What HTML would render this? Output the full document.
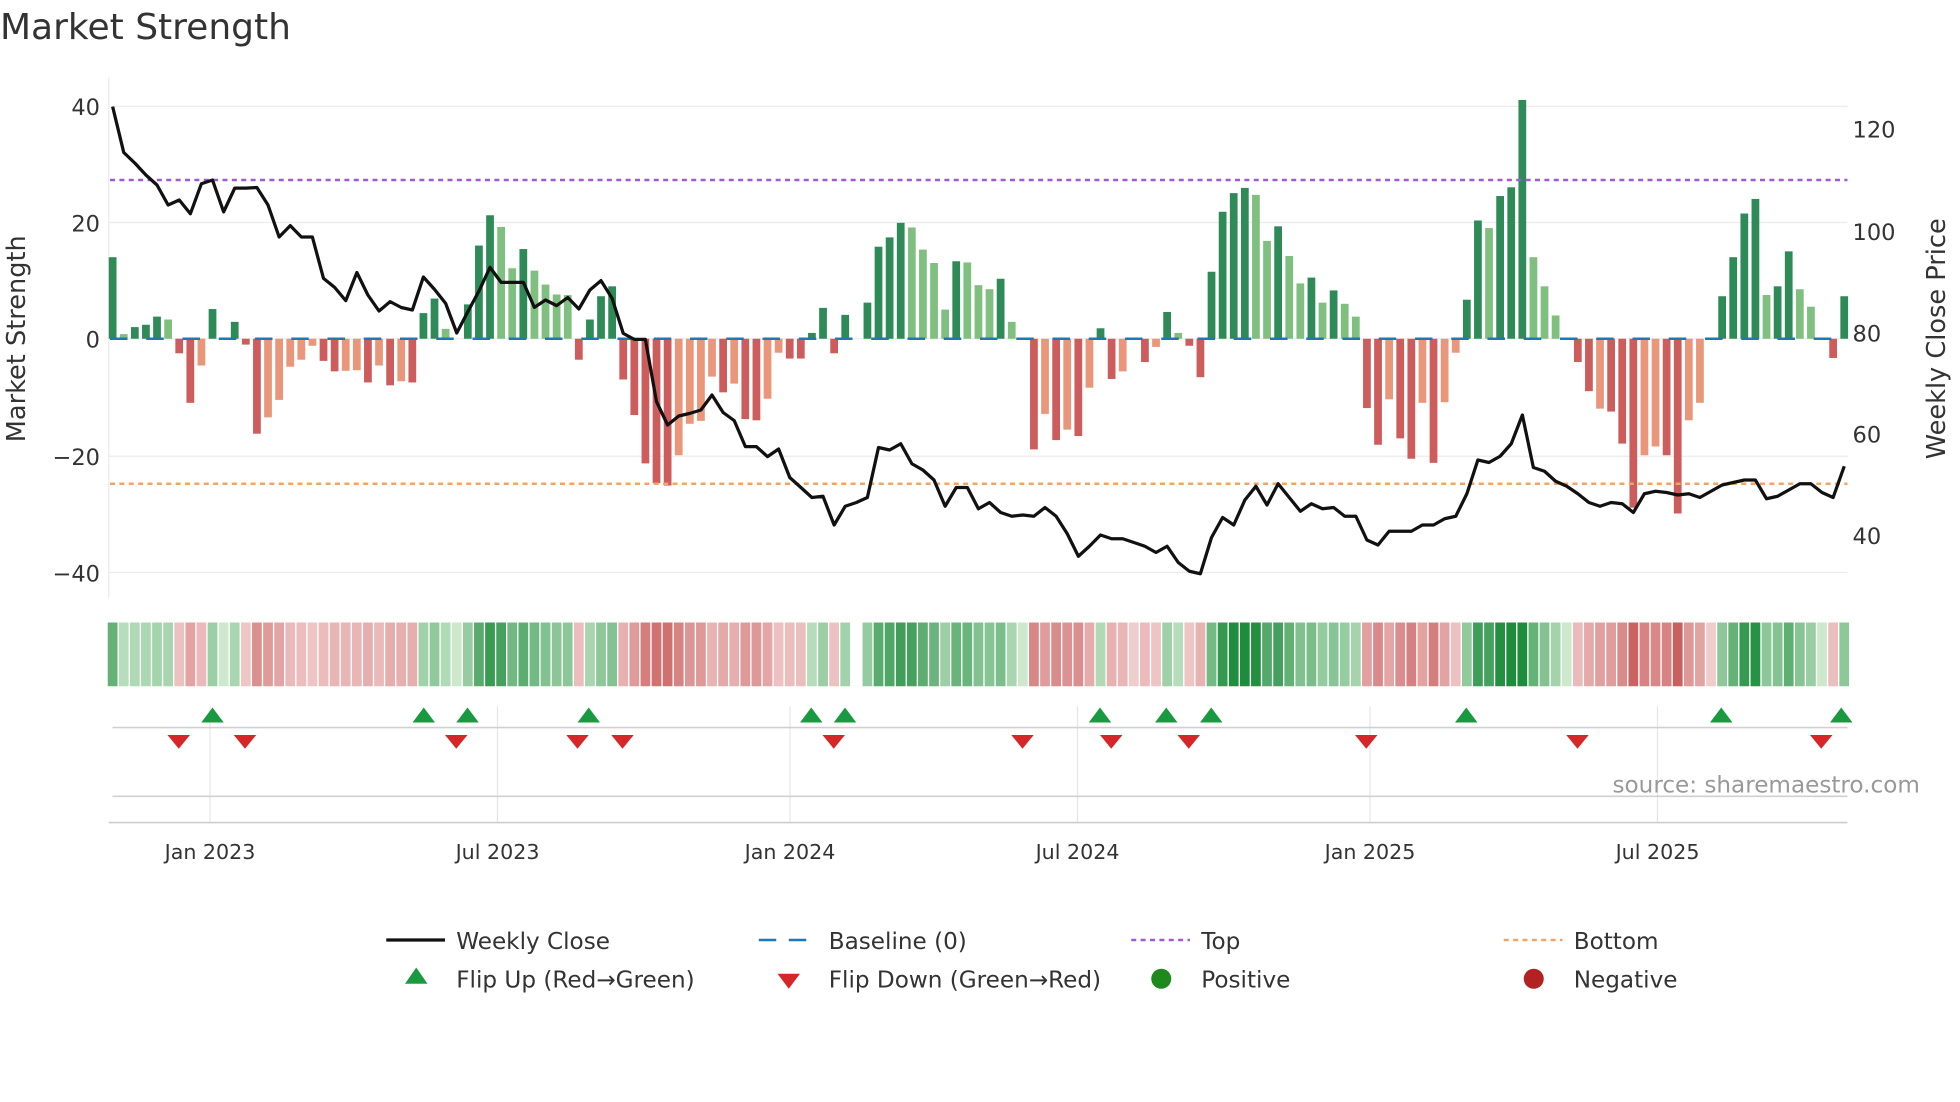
<!DOCTYPE html>
<html><head><meta charset="utf-8">
<style>
html,body{margin:0;padding:0;background:#fff;}
svg{display:block;font-family:"DejaVu Sans","Liberation Sans",sans-serif;}
</style></head>
<body>
<svg id="c" width="1960" height="1102" viewBox="0 0 1568 881.6" xmlns="http://www.w3.org/2000/svg">
<text x="0" y="31" font-size="28.8" fill="#333">Market Strength</text>
<g stroke="#ececec" stroke-width="1">
<line x1="87" y1="85" x2="1478" y2="85"/><line x1="87" y1="178" x2="1478" y2="178"/>
<line x1="87" y1="271" x2="1478" y2="271"/><line x1="87" y1="365" x2="1478" y2="365"/>
<line x1="87" y1="458" x2="1478" y2="458"/>
<line x1="87" y1="62" x2="87" y2="478"/>
</g>
<g font-size="18" fill="#333" text-anchor="end">
<text x="80" y="92">40</text><text x="80" y="185">20</text><text x="80" y="278">0</text>
<text x="80" y="372">−20</text><text x="80" y="465">−40</text>
</g>
<g font-size="18" fill="#333">
<text x="1482" y="110">120</text><text x="1482" y="192">100</text><text x="1482" y="273">80</text>
<text x="1482" y="354">60</text><text x="1482" y="435">40</text>
</g>
<text transform="translate(20,271) rotate(-90)" font-size="20.5" fill="#333" text-anchor="middle">Market Strength</text>
<text transform="translate(1556,271) rotate(-90)" font-size="20.5" fill="#333" text-anchor="middle">Weekly Close Price</text>
<g id="bars"></g>
<line x1="88" y1="271" x2="1478" y2="271" stroke="#1f77b4" stroke-width="2" stroke-dasharray="14 15"/>
<line x1="88" y1="144" x2="1478" y2="144" stroke="#a259d9" stroke-width="2" stroke-dasharray="4 3.5"/>
<line x1="88" y1="387" x2="1478" y2="387" stroke="#f4a460" stroke-width="2" stroke-dasharray="4 3.5"/>
<polyline id="price" fill="none" stroke="#111" stroke-width="2.6" stroke-linejoin="round"/>
<g id="strip"></g>
<g stroke="#e6e6e6" stroke-width="1">
<line x1="168" y1="565" x2="168" y2="658"/><line x1="398" y1="565" x2="398" y2="658"/>
<line x1="632" y1="565" x2="632" y2="658"/><line x1="862" y1="565" x2="862" y2="658"/>
<line x1="1096" y1="565" x2="1096" y2="658"/><line x1="1326" y1="565" x2="1326" y2="658"/>
</g>
<line x1="90" y1="582" x2="1478" y2="582" stroke="#d0d0d0" stroke-width="1.3"/>
<line x1="90" y1="637" x2="1478" y2="637" stroke="#d0d0d0" stroke-width="1.3"/>
<line x1="87" y1="658" x2="1478" y2="658" stroke="#ccc" stroke-width="1.3"/>
<g id="marks"></g>
<text x="1290" y="634" font-size="18.5" fill="#999">source: sharemaestro.com</text>
<g font-size="16.5" fill="#333" text-anchor="middle">
<text x="168" y="687">Jan 2023</text><text x="398" y="687">Jul 2023</text>
<text x="632" y="687">Jan 2024</text><text x="862" y="687">Jul 2024</text>
<text x="1096" y="687">Jan 2025</text><text x="1326" y="687">Jul 2025</text>
</g>
<g font-size="18.5" fill="#333">
<line x1="309" y1="752" x2="356" y2="752" stroke="#111" stroke-width="2.6"/>
<text x="365" y="759">Weekly Close</text>
<line x1="607" y1="752" x2="654" y2="752" stroke="#1f77b4" stroke-width="2" stroke-dasharray="14 10"/>
<text x="663" y="759">Baseline (0)</text>
<line x1="905" y1="752" x2="952" y2="752" stroke="#a259d9" stroke-width="2" stroke-dasharray="4 3.5"/>
<text x="961" y="759">Top</text>
<line x1="1203" y1="752" x2="1250" y2="752" stroke="#f4a460" stroke-width="2" stroke-dasharray="4 3.5"/>
<text x="1259" y="759">Bottom</text>
<polygon points="333,774 342,787 324,787" fill="#1a9a40"/>
<text x="365" y="790">Flip Up (Red→Green)</text>
<polygon points="622,779 640,779 631,791" fill="#d62728"/>
<text x="663" y="790">Flip Down (Green→Red)</text>
<circle cx="929" cy="783" r="8" fill="#1e8a1e"/>
<text x="961" y="790">Positive</text>
<circle cx="1227" cy="783" r="8" fill="#b22222"/>
<text x="1259" y="790">Negative</text>
</g>
</svg>
<script>
var V=[[14,0],[0.8,1],[2,0],[2.4,0],[3.8,0],[3.3,1],[-2.5,0],[-11,0],[-4.6,1],[5.1,0],[0,0],[2.9,0],[-1,0],[-16.3,0],[-13.5,1],[-10.5,1],[-4.8,1],[-3.6,1],[-1.2,1],[-3.8,0],[-5.6,0],[-5.5,1],[-5.4,1],[-7.5,0],[-4.6,1],[-8,0],[-7.3,1],[-7.5,0],[4.4,0],[6.9,0],[1.7,1],[0,0],[5.9,0],[16,0],[21.2,0],[19.2,1],[12.1,1],[15.4,0],[11.7,1],[9.3,1],
[7.6,1],[7.5,1],[-3.6,0],[3.3,0],[7.3,0],[9,0],[-7,0],[-13.1,0],[-21.4,0],[-24.8,0],[-25.2,0],[-20,1],[-14.6,1],[-14.1,1],[-6.5,1],[-9.2,0],[-7.7,1],[-13.8,0],[-14,0],[-10.3,1],[-2.4,1],[-3.4,0],[-3.4,0],[1,0],[5.3,0],[-2.5,0],[4.1,0],[0,0],[6.2,0],[15.8,0],[17.4,0],[19.9,0],[19.1,1],[15.3,1],[13,1],[5,1],[13.3,0],[13.1,1],[9.2,1],[8.5,1],[10.3,0],
[2.9,1],[0,0],[-19,0],[-12.9,1],[-17.4,0],[-15.6,1],[-16.7,0],[-8.4,1],[1.8,0],[-6.9,0],[-5.6,1],[0,0],[-4,0],[-1.4,1],[4.6,0],[1,1],[-1.2,0],[-6.6,0],[11.5,0],[21.8,0],[25,0],[25.9,0],[24.7,1],[16.8,1],[19.3,0],[14.2,1],[9.5,1],[10.5,0],[6.2,1],[8.3,0],[6,1],[3.8,1],[-11.9,0],[-18.2,0],[-10.4,1],[-17.1,0],[-20.6,0],[-11,1],[-21.3,0],[-10.9,1],[-2.4,1],
[6.7,0],[20.3,0],[19,1],[24.5,0],[26,0],[41,0],[14,1],[9,1],[4,1],[0,0],[-4,0],[-9,0],[-12,1],[-12.5,0],[-18,0],[-29,0],[-20,1],[-18.5,1],[-20,0],[-30,0],[-14,1],[-11,1],[0,0],[7.3,0],[14,0],[21.5,0],[24,0],[7.5,1],[9,0],[15,0],[8.5,1],[5.5,1],[0,0],[-3.3,0],[7.3,0]];
var P=[85.3,122,130.5,140,148,164,160,171,147,144,169.5,150.5,150.5,150,164,189.6,180.5,189.6,189.6,222.7,229.9,240.5,218,236,248.8,241.3,246,248,221.6,231.5,242.7,266.4,249.3,233,213.9,225.9,225.9,225.9,245.9,240,244.5,238,247.2,232,224.5,238.7,266.7,271.5,271.5,321.3,340,332.8,330.7,328,316,330,336.5,357.3,357.3,365.3,359.2,
382,390,398,397,420,405,402,398,358,360,355,371,376,384,405,390,390,407,402,410,413,412,413,406,413,427,445,437,428,431,431,434,437,442,437,450,457,459,430,414,420,400,389,404,387,398,409,403,407,406,413,413,432,436,425,425,425,420,420,415,413,395,368,370,365,355,332,374,377,385,389,395,402,405,402,403,410,395,393,394,396,395,398,393,388,386,384,384,399,397,392,387,387,394,398,373];
var NS="http://www.w3.org/2000/svg",bars=document.getElementById("bars"),strip=document.getElementById("strip");
function R(g,x,y,w,h,f){var r=document.createElementNS(NS,"rect");r.setAttribute("x",x);r.setAttribute("y",y);r.setAttribute("width",w);r.setAttribute("height",h);r.setAttribute("fill",f);g.appendChild(r);}
function mix(a,b,t){return "rgb("+[0,1,2].map(function(i){return Math.round(a[i]+(b[i]-a[i])*t)}).join(",")+")";}
var pts=[],lastSign=1;
for(var i=0;i<V.length;i++){var x=90.1+8.88*i,v=V[i][0],l=V[i][1];
 if(v!==0){var col=v>0?(l?"#7fbf7f":"#2e8b57"):(l?"#e9967a":"#cd5c5c");
  var h=Math.abs(v)*4.66;R(bars,x-3.1,v>0?271-h:271,6.2,h,col);}
 var sc;
 if(v>0){lastSign=1;var t=Math.min(1,0.15+v/30);sc=mix([215,238,215],[30,140,60],t);}
 else if(v<0){lastSign=-1;var t=Math.min(1,0.1+(-v)/35);sc=mix([244,214,214],[200,90,90],t);}
 else sc=(i==67)?"#ffffff":(lastSign>0?"rgb(205,232,205)":"rgb(240,205,205)");
 R(strip,x-3.9,498,7.8,51,sc);
}
for(var i=0;i<P.length;i++)pts.push((90.1+8.88*i).toFixed(1)+","+P[i]);
document.getElementById("price").setAttribute("points",pts.join(" "));
var m=document.getElementById("marks"),s="";
[170,339,374,471,649,676,880,933,969,1173,1377,1473].forEach(function(x){s+='<polygon points="'+x+',566 '+(x+9)+',578 '+(x-9)+',578" fill="#1a9a40"/>';});
[143,196,365,462,498,667,818,889,951,1093,1262,1457].forEach(function(x){s+='<polygon points="'+(x-9)+',588 '+(x+9)+',588 '+x+',599" fill="#d62728"/>';});
m.innerHTML=s;
</script>
</body></html>
